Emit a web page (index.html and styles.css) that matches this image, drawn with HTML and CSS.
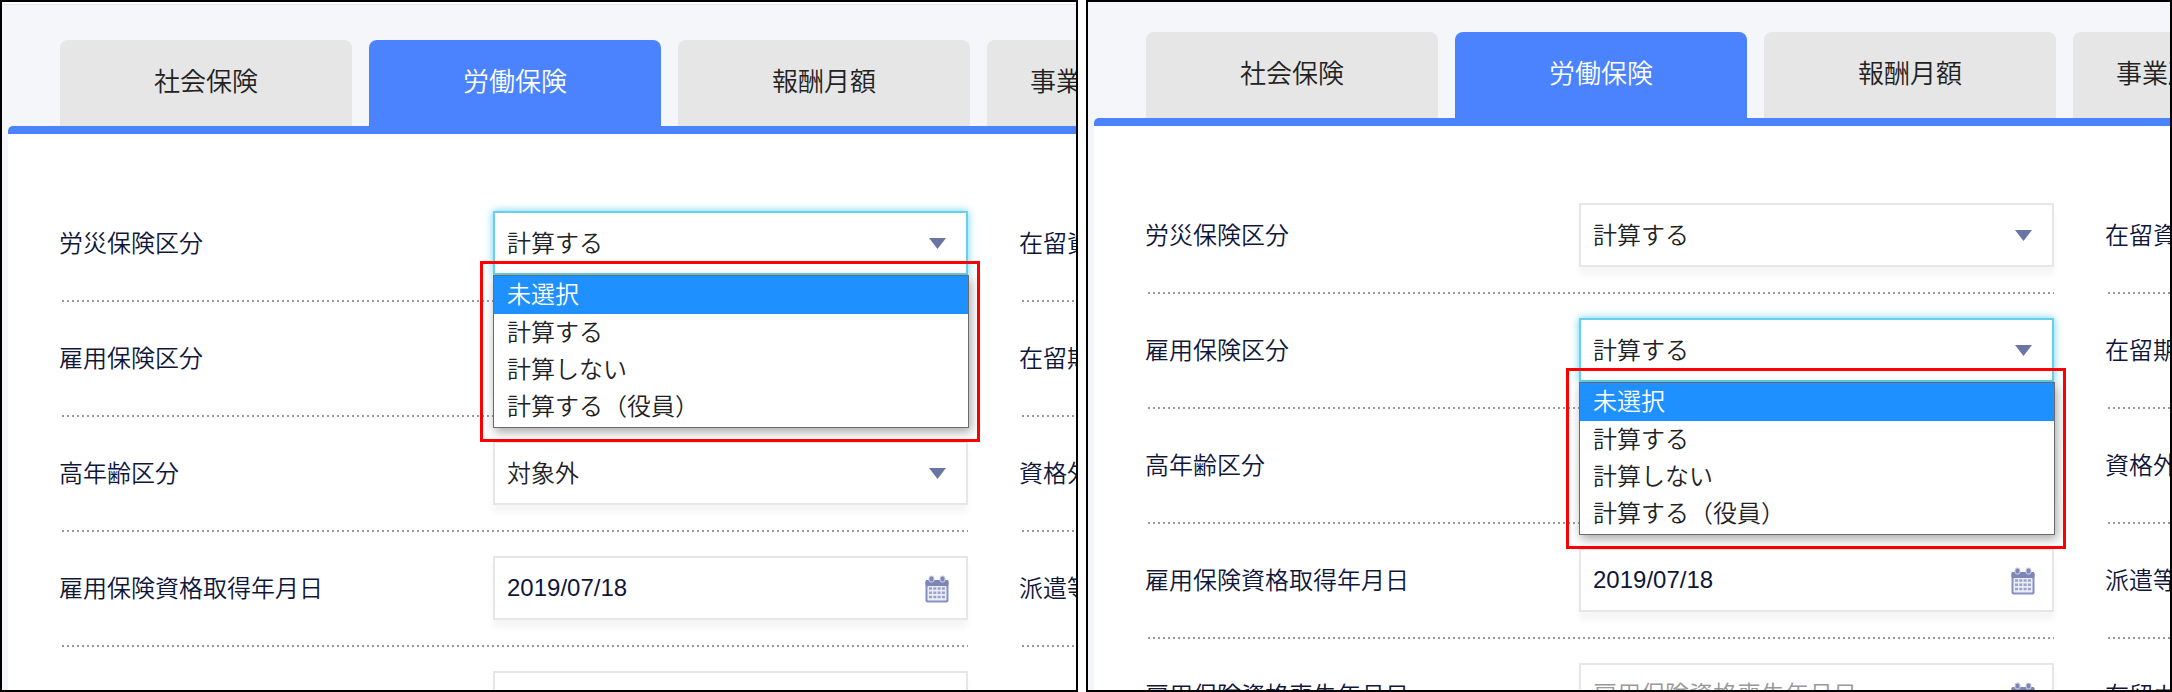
FILE: index.html
```html
<!DOCTYPE html>
<html lang="ja">
<head>
  <meta charset="UTF-8">
  <title>労働保険</title>
  <link rel="stylesheet" href="styles.css">
</head>
<body>
  <svg class="sprite" aria-hidden="true">
    <symbol id="arrow" viewBox="0 0 17 11">
      <path d="M0 0h17L8.500 11z" fill="#6b75a5"/>
    </symbol>
    <symbol id="calendar" viewBox="0 0 24 28">
      <rect x="0.500" y="5" width="23" height="22.500" rx="2" fill="#8791c4"/>
      <rect x="0.500" y="5" width="23" height="6" rx="1.500" fill="#7c86b8"/>
      <rect x="4" y="1" width="5" height="6" rx="2" fill="#7c86b8" stroke="#d3d7ea"/>
      <rect x="15" y="1" width="5" height="6" rx="2" fill="#7c86b8" stroke="#d3d7ea"/>
      <rect x="2.500" y="11" width="19" height="14.500" rx="1" fill="#eceef7"/>
      <path d="M4 13.500h16M4 17.800h16M4 22h16" stroke="#9aa2cd" stroke-width="2.500" stroke-dasharray="3 1.300"/>
    </symbol>
  </svg>

  <div class="screens">
    <section class="screen screen-left">
      <nav class="tabs">
        <button type="button" class="tab">社会保険</button>
        <button type="button" class="tab active">労働保険</button>
        <button type="button" class="tab">報酬月額</button>
        <button type="button" class="tab tab-last">事業所</button>
      </nav>
      <form class="form">
        <div class="row">
          <label for="rosai1">労災保険区分</label>
          <div class="field">
            <select id="rosai1" class="focused"><option>計算する</option></select>
            <svg class="arrow"><use href="#arrow"/></svg>
            <div class="popup-frame">
              <ul class="popup">
                <li class="selected">未選択</li>
                <li>計算する</li>
                <li>計算しない</li>
                <li>計算する（役員）</li>
              </ul>
            </div>
          </div>
        </div>
        <div class="row"><span class="name">在留資</span></div>

        <div class="row">
          <label for="koyo1">雇用保険区分</label>
          <div class="field">
            <select id="koyo1"><option>計算する</option></select>
            <svg class="arrow"><use href="#arrow"/></svg>
          </div>
        </div>
        <div class="row"><span class="name">在留期</span></div>

        <div class="row">
          <label for="konenrei1">高年齢区分</label>
          <div class="field">
            <select id="konenrei1"><option>対象外</option></select>
            <svg class="arrow"><use href="#arrow"/></svg>
          </div>
        </div>
        <div class="row"><span class="name">資格外</span></div>

        <div class="row">
          <label for="shutoku1">雇用保険資格取得年月日</label>
          <div class="field">
            <input type="text" id="shutoku1" value="2019/07/18">
            <svg class="calendar"><use href="#calendar"/></svg>
          </div>
        </div>
        <div class="row"><span class="name">派遣等</span></div>

        <div class="row">
          <label for="soshitsu1">雇用保険資格喪失年月日</label>
          <div class="field">
            <input type="text" id="soshitsu1" placeholder="雇用保険資格喪失年月日">
            <svg class="calendar"><use href="#calendar"/></svg>
          </div>
        </div>
        <div class="row"><span class="name">在留カ</span></div>
      </form>
    </section>

    <section class="screen">
      <nav class="tabs">
        <button type="button" class="tab">社会保険</button>
        <button type="button" class="tab active">労働保険</button>
        <button type="button" class="tab">報酬月額</button>
        <button type="button" class="tab tab-last">事業所</button>
      </nav>
      <form class="form">
        <div class="row">
          <label for="rosai2">労災保険区分</label>
          <div class="field">
            <select id="rosai2"><option>計算する</option></select>
            <svg class="arrow"><use href="#arrow"/></svg>
          </div>
        </div>
        <div class="row"><span class="name">在留資</span></div>

        <div class="row">
          <label for="koyo2">雇用保険区分</label>
          <div class="field">
            <select id="koyo2" class="focused"><option>計算する</option></select>
            <svg class="arrow"><use href="#arrow"/></svg>
            <div class="popup-frame">
              <ul class="popup">
                <li class="selected">未選択</li>
                <li>計算する</li>
                <li>計算しない</li>
                <li>計算する（役員）</li>
              </ul>
            </div>
          </div>
        </div>
        <div class="row"><span class="name">在留期</span></div>

        <div class="row">
          <label for="konenrei2">高年齢区分</label>
          <div class="field">
            <select id="konenrei2"><option>対象外</option></select>
            <svg class="arrow"><use href="#arrow"/></svg>
          </div>
        </div>
        <div class="row"><span class="name">資格外</span></div>

        <div class="row">
          <label for="shutoku2">雇用保険資格取得年月日</label>
          <div class="field">
            <input type="text" id="shutoku2" value="2019/07/18">
            <svg class="calendar"><use href="#calendar"/></svg>
          </div>
        </div>
        <div class="row"><span class="name">派遣等</span></div>

        <div class="row">
          <label for="soshitsu2">雇用保険資格喪失年月日</label>
          <div class="field">
            <input type="text" id="soshitsu2" placeholder="雇用保険資格喪失年月日">
            <svg class="calendar"><use href="#calendar"/></svg>
          </div>
        </div>
        <div class="row"><span class="name">在留カ</span></div>
      </form>
    </section>
  </div>
</body>
</html>
```
FILE: styles.css
```css
:root {
  --blue: #4b83ff;
  --page-bg: #f5f6fa;
  --tab-bg: #e6e6e6;
  --text: #222;
  --label: #10163a;
  --border: #e6e6e6;
}

* {
  box-sizing: border-box;
}

body {
  margin: 0;
  background: #fff;
  color: var(--label);
  font-family: "Liberation Sans", "Noto Sans CJK JP", sans-serif;
  font-size: 24px;
  font-weight: 350;
}

.sprite {
  display: none;
}

.screens {
  display: grid;
  grid-template-columns: 1078fr 1086fr;
  gap: 8px;
  height: 100vh;
}

.screen {
  display: flex;
  flex-direction: column;
  min-width: 0;
  padding: 30px 0 0 6px;
  border: 2px solid #000;
  background: var(--page-bg);
  overflow: hidden;
}

.screen-left {
  padding-top: 38px;
  background: linear-gradient(#fff 0 2px, #e3e6ee 2px 3px, var(--page-bg) 3px);
}

/* tabs */
.tabs {
  display: flex;
  gap: 17px;
  padding-left: 52px;
}

.tab {
  flex: none;
  width: 292px;
  height: 86px;
  padding: 0 0 8px;
  border: none;
  border-radius: 8px 8px 0 0;
  background: var(--tab-bg);
  color: var(--text);
  font-family: inherit;
  font-size: 26px;
  font-weight: inherit;
  cursor: pointer;
}

.tab.active {
  background: var(--blue);
  color: #fff;
}

.tab-last {
  padding-left: 43px;
  text-align: left;
}

/* form */
.form {
  flex: 1;
  display: grid;
  grid-template-columns: 909px 909px;
  grid-auto-rows: max-content;
  column-gap: 51px;
  padding: 53px 0 0 51px;
  border-top: 8px solid var(--blue);
  border-top-left-radius: 5px;
  background: #fff;
}

.row {
  display: flex;
  justify-content: space-between;
  align-items: center;
  height: 115px;
  padding: 24px 0 27px;
  white-space: nowrap;
  background: repeating-linear-gradient(to right, #999 0 2px, transparent 2px 5px) right bottom / calc(100% - 3px) 2px no-repeat;
}

.row label,
.row .name {
  padding-bottom: 4px;
}

.field {
  position: relative;
  width: 475px;
}

.field select,
.field input {
  display: block;
  width: 100%;
  height: 64px;
  padding: 0 60px 0 12px;
  border: 2px solid var(--border);
  border-radius: 0;
  outline: none;
  appearance: none;
  background: #fff;
  box-shadow: 0 8px 6px rgba(0, 0, 0, 0.04);
  color: var(--text);
  font-family: inherit;
  font-size: 24px;
  font-weight: inherit;
}

.field input {
  color: var(--label);
}

.field input::placeholder {
  color: #999;
}

.field select.focused {
  border-color: #66d0ee;
  box-shadow: 0 0 8px #66d0ee;
}

.arrow,
.calendar {
  position: absolute;
  pointer-events: none;
}

.arrow {
  top: 27px;
  right: 22px;
  width: 17px;
  height: 11px;
}

.calendar {
  top: 19px;
  right: 19px;
  width: 24px;
  height: 28px;
}

/* opened list */
.popup-frame {
  position: absolute;
  z-index: 1;
  top: 50px;
  left: -13px;
  right: -12px;
  padding: 11px 8px 11px 10px;
  border: 3px solid #f00;
}

.popup {
  margin: 0;
  padding: 0 0 2px;
  border: 1px solid #6b6b6b;
  background: #fff;
  box-shadow: 2px 4px 10px rgba(0, 0, 0, 0.35);
  color: var(--text);
  line-height: 37px;
  list-style: none;
}

.popup li {
  padding-left: 13px;
}

.popup .selected {
  padding-bottom: 1px;
  background: #1e90ff;
  color: #fff;
}
```
